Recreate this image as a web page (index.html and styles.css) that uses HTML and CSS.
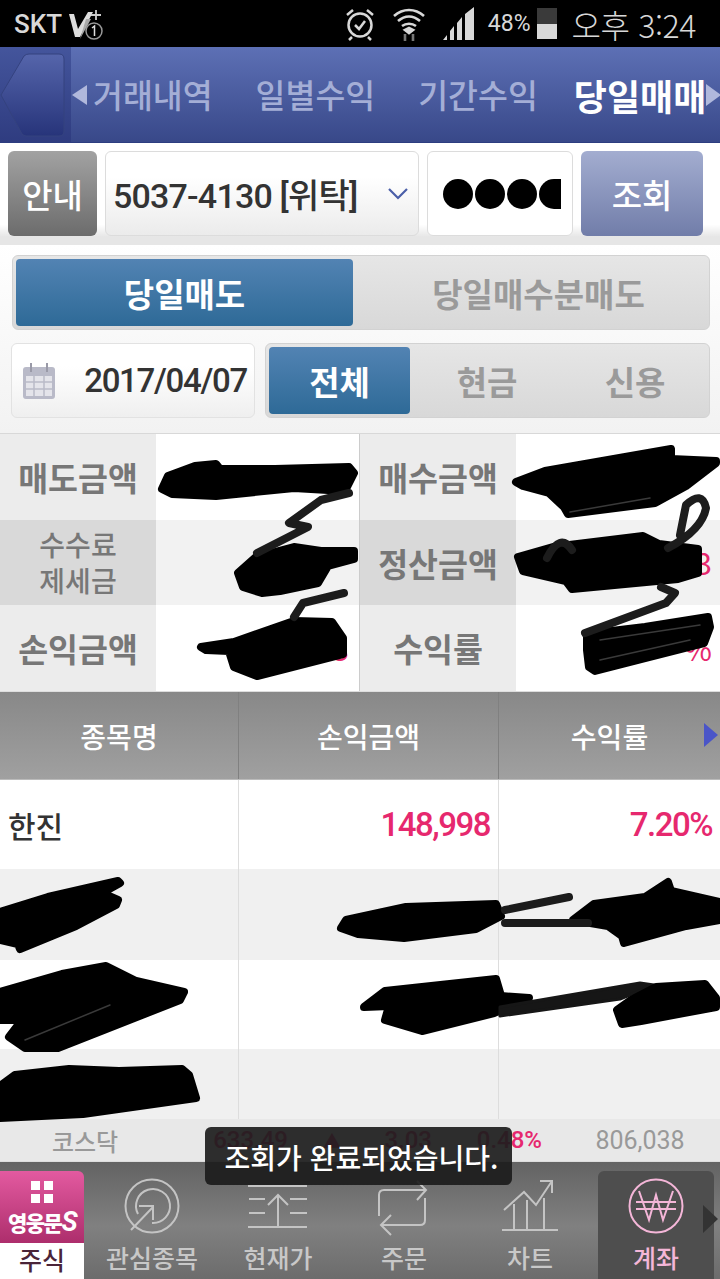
FILE: index.html

```html
<!DOCTYPE html>
<html lang="ko">
<head>
  <meta charset="UTF-8" />
  <meta name="viewport" content="width=device-width, initial-scale=1.0" />
  <title>당일매매</title>
  <link rel="stylesheet" href="styles.css">
</head>
<body>
<div class="page">

  <div class="status">
    <div class="status-left">
      <span class="carrier">SKT</span>
      <svg class="volte" width="36" height="34" viewBox="0 0 36 34">
        <path d="M1 7h5l4 15L20 5h5L12 30H7z" fill="#ddd"/>
        <path d="M18 12h5L12 32z" fill="#aaa"/>
        <path d="M28 3v10M23 8h10" stroke="#ccc" stroke-width="1.800"/>
        <circle cx="26" cy="24" r="8" fill="none" stroke="#999" stroke-width="1.500"/>
        <path d="M24 21l2.500-2v10" fill="none" stroke="#ddd" stroke-width="1.500"/>
      </svg>
    </div>
    <div class="status-right">
      <svg class="alarm" width="32" height="34" viewBox="0 0 32 34" fill="none" stroke="#d8d8d8" stroke-width="2.500">
        <circle cx="16" cy="18" r="11.500"/>
        <path d="M11 18l4 4 6-8M3 8l6-5M29 8l-6-5M8 30l-3 3M24 30l3 3"/>
      </svg>
      <svg class="wifi" width="34" height="36" viewBox="0 0 34 36" fill="none" stroke="#d8d8d8" stroke-width="2.600">
        <path d="M2 10c9-8 21-8 30 0M6 15c7-6 15-6 22 0M10 20c4-3 10-3 14 0"/>
        <path d="M13 24l4 3 4-3-4-2z" fill="#d8d8d8"/>
        <path d="M13 28v7M21 35v-7" stroke="#777"/>
      </svg>
      <svg class="signal" width="32" height="34" viewBox="0 0 32 34" fill="#d8d8d8">
        <path d="M0 33l4-5v5zM7 33V24l4-5v14zM14 33V16l5-6v23zM22 33V7l9-7v33z"/>
      </svg>
      <span class="pct">48%</span>
      <div class="battery"><div class="battery-fill"></div></div>
      <span class="clock">오후 3:24</span>
    </div>
  </div>

  <div class="nav">
    <div class="back"><svg width="71" height="96" viewBox="0 0 71 96">
      <defs><linearGradient id="backFill" x1="0" y1="0" x2="0" y2="1">
        <stop offset="0" stop-color="#5565ab"/><stop offset="1" stop-color="#27347a"/>
      </linearGradient></defs>
      <path d="M1 48L24 9q2-2 5-2h30q5 0 5 5v72q0 5-5 5H26q-2 0-4-2z" fill="url(#backFill)" stroke="#34427f"/>
    </svg></div>
    <span class="arrow arrow-left"></span>
    <a class="nav-item">거래내역</a>
    <a class="nav-item">일별수익</a>
    <a class="nav-item">기간수익</a>
    <a class="nav-item nav-current">당일매매</a>
    <span class="arrow arrow-right"></span>
  </div>

  <div class="account-row">
    <button class="btn-info">안내</button>
    <div class="account-select">
      <span>5037-4130 [위탁]</span>
      <svg width="22" height="12" viewBox="0 0 22 12" fill="none" stroke="#4a5ea8" stroke-width="2.200"><path d="M2 1l9 9 9-9"/></svg>
    </div>
    <div class="password"><i></i><i></i><i></i><i class="cut"></i></div>
    <button class="btn-search">조회</button>
  </div>

  <div class="filters">
    <div class="segment segment-wide">
      <span class="seg-on">당일매도</span>
      <span class="seg-off">당일매수분매도</span>
    </div>
    <div class="filter-row">
      <div class="date">
        <svg width="34" height="38" viewBox="0 0 34 38">
          <rect x="1" y="5" width="32" height="32" rx="3" fill="#b9bac8"/>
          <path d="M4 14h26v20H4z" fill="#e4e4ea"/>
          <path d="M4 20h26M4 27h26M12 14v20M22 14v20" stroke="#b9bac8" stroke-width="1.500"/>
          <path d="M9 1v9M25 1v9" stroke="#9a9aa8" stroke-width="2"/>
        </svg>
        <span>2017/04/07</span>
      </div>
      <div class="segment segment-small">
        <span class="seg-on">전체</span>
        <span class="seg-off">현금</span>
        <span class="seg-off">신용</span>
      </div>
    </div>
  </div>

  <div class="summary">
    <div class="s-label">매도금액</div><div class="s-val"></div>
    <div class="s-label s-left">매수금액</div><div class="s-val"></div>
    <div class="s-label s-dark s-small">수수료<br>제세금</div><div class="s-val s-grey"></div>
    <div class="s-label s-dark s-left">정산금액</div><div class="s-val s-grey"><em>3</em></div>
    <div class="s-label">손익금액</div><div class="s-val"><em class="s-end">3</em></div>
    <div class="s-label s-left">수익률</div><div class="s-val"><em>%</em></div>
  </div>

  <div class="table">
    <div class="t-head">
      <div class="t-cell">종목명</div>
      <div class="t-cell">손익금액</div>
      <div class="t-cell">수익률<span class="t-more"></span></div>
    </div>
    <div class="t-row r1">
      <div class="t-cell t-name">한진</div>
      <div class="t-cell t-num">148,998</div>
      <div class="t-cell t-num">7.20%</div>
    </div>
    <div class="t-row r2 t-grey"><div class="t-cell"></div><div class="t-cell"></div><div class="t-cell"></div></div>
    <div class="t-row r3"><div class="t-cell"></div><div class="t-cell"></div><div class="t-cell"></div></div>
    <div class="t-row r4 t-grey"><div class="t-cell"></div><div class="t-cell"></div><div class="t-cell"></div></div>
  </div>

  <div class="index-strip">
    <span class="i-name">코스닥</span>
    <span class="i-val">633.49</span>
    <span class="i-up">▲</span>
    <span class="i-diff">3.03</span>
    <span class="i-rate">0.48%</span>
    <span class="i-vol">806,038</span>
  </div>

  <div class="tabbar">
    <div class="brand">
      <div class="brand-top">
        <div class="brand-dots"><i></i><i></i><i></i><i></i></div>
        <div class="brand-name">영웅문<b>S</b></div>
      </div>
      <div class="brand-label">주식</div>
    </div>
    <div class="tab">
      <svg width="60" height="60" viewBox="0 0 60 60" fill="none" stroke="#c4c4c4" stroke-width="2">
        <circle cx="30" cy="28" r="26.500"/>
        <path d="M16 36a17 17 0 1 1 14 9M9 52l22-23M17 28h14v14"/>
      </svg>
      <span>관심종목</span>
    </div>
    <div class="tab">
      <svg width="60" height="60" viewBox="0 0 60 60" fill="none" stroke="#c4c4c4" stroke-width="2">
        <path d="M0 8h59M1 21h16M42 21h17M1 35h16M42 35h17M0 49h59M30 49V17M20 27l10-10 10 10"/>
      </svg>
      <span>현재가</span>
    </div>
    <div class="tab">
      <svg width="60" height="60" viewBox="0 0 60 60" fill="none" stroke="#c4c4c4" stroke-width="2">
        <path d="M5 38V17q0-5 5-5h42M43 3l9 9-9 10M51 20v22q0 5-5 5H7M17 37L7 47l10 10"/>
      </svg>
      <span>주문</span>
    </div>
    <div class="tab">
      <svg width="60" height="60" viewBox="0 0 60 60" fill="none" stroke="#c4c4c4" stroke-width="2">
        <path d="M2 52h56M4 32L24 14l12 13L52 3M40 3h12v12M14 52V26M27 52V22M44 52V20"/>
      </svg>
      <span>차트</span>
    </div>
    <div class="tab tab-on">
      <svg width="60" height="60" viewBox="0 0 60 60" fill="none" stroke="#f4b6d8" stroke-width="2">
        <circle cx="30" cy="28" r="26.500"/>
        <path d="M13 13l10 29 7-25 7 25 10-29M10 24h40M10 31h40"/>
      </svg>
      <span>계좌</span>
    </div>
    <span class="tab-more"></span>
  </div>

  <!-- marker scribbles drawn over the private figures -->
  <svg class="scribble" width="720" height="700" viewBox="0 434 720 700" fill="#000" stroke="#000" stroke-width="8" stroke-linejoin="round" stroke-linecap="round">
    <path d="M162 489L168 476L195 466L216 464L220 469L275 469L349 467L354 473L345 491L294 488L216 496L172 494z"/>
    <path d="M238 573L256 557L294 547L321 551L354 551L354 559L328 566L318 583L280 591L262 593L243 587z"/>
    <path d="M201 647L234 642L294 621L332 622L343 638L343 654L257 676L234 667L229 651L206 650z"/>
    <path d="M516 482L545 471L671 449L671 459L716 461L716 463L686 486L655 503L568 514L564 507L549 493L523 486z"/>
    <path d="M518 557L553 547L643 536L659 544L698 549L698 573L678 579L572 589L566 581L523 571z"/>
    <path d="M587 634L645 627L708 617L710 627L704 643L641 659L595 671L589 667L587 650z"/>
    <path d="M0 912L48 897L118 881L120 883L102 893L118 900L116 905L76 926L20 949L18 944L0 940z"/>
    <path d="M341 928L346 920L406 907L496 904L501 916L476 929L404 938L358 934z"/>
    <path d="M573 920L594 904L645 897L668 882L671 891L720 902L720 920L686 926L624 943L622 936L608 926z"/>
    <path d="M0 992L62 974L106 966L136 981L184 992L180 1000L58 1048L25 1048L9 1037L22 1020L0 1020z"/>
    <path d="M364 1007L385 991L496 979L501 996L529 998L494 1013L422 1031L385 1020L389 1006z"/>
    <path d="M500 1007L640 983L654 985L620 999L500 1016z" stroke="#161616" fill="#161616" stroke-width="3"/>
    <path d="M617 1010L631 1000L656 987L705 984L716 998L716 1007L641 1021L622 1024z"/>
    <path d="M15 1075L69 1069L119 1071L182 1069L189 1075L196 1098L83 1114L0 1118L0 1086z"/>
    <g fill="none" stroke="#1c1c1c" stroke-width="8">
      <path d="M349 493L321 500L289 523L308 527L257 553"/>
      <path d="M344 593L303 603L294 617"/>
      <path d="M680 535L686 505Q702 490 706 508Q702 530 668 548"/>
      <path d="M547 558Q560 532 572 550"/>
      <path d="M661 587L675 593L666 603L585 633"/>
      <path d="M505 910L569 897M505 923L588 923"/>
    </g>
    <g fill="none" stroke="#3a3a3a" stroke-width="1.500">
      <path d="M570 512L650 498"/>
      <path d="M600 640L700 625M600 660L690 640"/>
      <path d="M25 1040L110 1005"/>
    </g>
  </svg>

  <div class="toast">조회가 완료되었습니다.</div>
</div>
</body>
</html>
```

FILE: styles.css

```css
* { box-sizing: border-box; }
body {
  margin: 0;
  background: #fff;
  font-family: "Noto Sans CJK KR", "Roboto", sans-serif;
  color: #333;
}
.page {
  position: relative;
  width: 720px;
  height: 1279px;
  overflow: hidden;
}

/* status bar */
.status {
  height: 47px;
  background: #000;
  color: #d8d8d8;
  display: flex;
  justify-content: space-between;
  align-items: center;
  padding: 0 24px 0 14px;
}
.status-left, .status-right { display: flex; align-items: center; }
.carrier { font: 500 26px "Roboto", sans-serif; margin-right: 6px; }
.status-right .alarm { margin-right: 16px; }
.status-right .wifi { margin-right: 17px; }
.status-right .signal { margin-right: 13px; }
.pct { font: 400 23px "Roboto", sans-serif; margin-right: 6px; }
.battery {
  width: 20px;
  height: 31px;
  background: #3a3a3a;
  display: flex;
  align-items: flex-end;
  margin-right: 15px;
}
.battery-fill { width: 100%; height: 15px; background: #d8d8d8; }
.clock { font-size: 32px; font-weight: 300; letter-spacing: -0.4px; line-height: 1; }

/* top nav */
.nav {
  height: 96px;
  background: linear-gradient(to bottom, #5d70b5, #384889);
  display: flex;
  align-items: center;
  border-bottom: 1px solid #2d3d80;
}
.back {
  width: 71px;
  height: 95px;
  background: linear-gradient(to bottom, #44559c, #2f3c80);
  flex: none;
}
.nav-item {
  flex: none;
  white-space: nowrap;
  font-size: 32.500px;
  font-weight: 500;
  color: #a4aed6;
  line-height: 1;
  margin-right: 43px;
}
.nav-current { font-size: 36px; font-weight: 700; color: #fff; margin: 0 0 0 -7px; }
.arrow { width: 0; height: 0; border-style: solid; flex: none; }
.arrow-left { border-width: 10px 15px 10px 0; border-color: transparent #b0b8dc transparent transparent; margin: 0 6px 0 1px; }
.arrow-right { border-width: 11px 0 11px 15px; border-color: transparent transparent transparent #b0b8dc; }

/* account row */
.account-row {
  height: 102px;
  background: linear-gradient(to bottom, #fff 80%, #e6e6e6 92%);
  display: flex;
  gap: 8px;
  padding: 8px 0 9px 8px;
}
.btn-info, .btn-search {
  border: none;
  border-radius: 6px;
  color: #fff;
  font-family: inherit;
  font-size: 33px;
  font-weight: 500;
  padding: 0;
}
.btn-info { width: 89px; background: linear-gradient(to bottom, #a2a2a2, #6c6c6c); }
.btn-search { width: 122px; background: linear-gradient(to bottom, #a3add0, #717da9); }
.account-select {
  width: 314px;
  border: 1px solid #dcdcdc;
  border-radius: 6px;
  background: linear-gradient(to bottom, #fff 30%, #ebebeb);
  display: flex;
  align-items: center;
  justify-content: space-between;
  padding: 0 9px 0 7px;
  font-family: "Roboto", "Noto Sans CJK KR", sans-serif;
  font-size: 34px;
  font-weight: 500;
  letter-spacing: -0.800px;
  color: #333;
}
.password {
  width: 146px;
  border: 1px solid #dcdcdc;
  border-radius: 6px;
  background: #fff;
  display: flex;
  align-items: center;
  gap: 2px;
  padding-left: 15px;
}
.password i { width: 30px; height: 30px; border-radius: 50%; background: #000; flex: none; }
.password .cut { width: 22px; border-radius: 15px 0 0 15px; }

/* filters */
.filters {
  height: 189px;
  background: linear-gradient(to bottom, #fff, #f2f2f2);
  padding: 10px 10px 0 11px;
  border-bottom: 1px solid #d8d8d8;
}
.segment {
  border: 1px solid #d2d2d2;
  border-radius: 6px;
  background: linear-gradient(to bottom, #e6e6e6, #d8d8d8);
  display: flex;
  padding: 3px;
}
.segment span {
  display: flex;
  align-items: center;
  justify-content: center;
  font-size: 33px;
  font-weight: 700;
}
.seg-on {
  color: #fff;
  border-radius: 4px;
  background: linear-gradient(to bottom, #5283b3, #2e6a97);
}
.seg-off { color: #9a9a9a; }
.segment-wide { height: 75px; margin-left: 1px; }
.segment-wide .seg-on { width: 337px; }
.segment-wide .seg-off { flex: 1; padding-left: 18px; }
.filter-row { display: flex; gap: 10px; margin-top: 13px; height: 75px; }
.date {
  width: 244px;
  border: 1px solid #e2e2e2;
  border-radius: 6px;
  background: linear-gradient(to bottom, #fff 30%, #efefef);
  display: flex;
  align-items: center;
  justify-content: space-between;
  padding: 0 7px 0 10px;
  font-family: "Roboto", sans-serif;
  font-size: 33px;
  font-weight: 500;
  letter-spacing: -1.300px;
}
.segment-small { flex: 1; }
.segment-small span { flex: 1; padding-left: 6px; }
.segment-small .seg-on { flex: none; width: 141px; padding-left: 0; }

/* summary grid */
.summary {
  display: grid;
  grid-template-columns: 156px 203px 157px 204px;
  grid-auto-rows: 85.500px;
  height: 258px;
  border-bottom: 2px solid #ddd;
}
.s-label {
  background: #ececec;
  color: #777;
  font-size: 32.500px;
  font-weight: 700;
  display: flex;
  align-items: center;
  justify-content: center;
  text-align: center;
}
.s-left { border-left: 1px solid #ccc; }
.s-dark { background: #d9d9d9; }
.s-small { font-size: 28px; line-height: 36px; font-weight: 500; }
.s-val {
  background: #fff;
  display: flex;
  align-items: center;
  justify-content: flex-end;
  padding-right: 8px;
  font-size: 30px;
  color: #e6286e;
}
.s-val em { font-style: normal; }
.s-val .s-end { margin-right: 2px; }
.s-grey { background: #f2f2f2; }

/* stock table */
.table { height: 427px; }
.t-head, .t-row { display: grid; grid-template-columns: 239px 260px 221px; }
.t-head {
  height: 88px;
  background: linear-gradient(to bottom, #888, #a0a0a0);
  color: #fff;
  font-size: 28px;
  font-weight: 500;
  border-bottom: 1px solid #bbb;
}
.t-cell {
  position: relative;
  display: flex;
  align-items: center;
  justify-content: center;
  border-right: 1px solid #ddd;
}
.t-head .t-cell { border-right-color: #808080; }
.t-cell:last-child { border-right: none; }
.t-more {
  position: absolute;
  right: 2px;
  top: 31px;
  border-style: solid;
  border-width: 12px 0 12px 14px;
  border-color: transparent transparent transparent #4a55c8;
}
.r1 { height: 89px; }
.r2 { height: 91px; }
.r3 { height: 89px; }
.r4 { height: 70px; }
.t-grey { background: #f0f0f0; }
.t-name { justify-content: flex-start; padding-left: 8px; font-size: 30px; font-weight: 500; color: #333; }
.t-num {
  justify-content: flex-end;
  padding-right: 8px;
  font: 500 33px "Roboto", sans-serif;
  letter-spacing: -1.500px;
  color: #e6286e;
}

/* index strip */
.index-strip {
  height: 43px;
  background: #e8e8e8;
  display: grid;
  grid-template-columns: 170px 118px 57px 87px 110px 178px;
  align-items: center;
  font-size: 24px;
  color: #999;
  border-bottom: 1px solid #ddd;
}
.i-name { text-align: center; font-weight: 500; font-size: 24px; }
.i-val, .i-diff, .i-rate {
  text-align: right;
  color: #e6286e;
  font: 500 24px "Roboto", sans-serif;
}
.i-up { text-align: right; color: #e6286e; font-size: 18px; padding-right: 4px; }
.i-vol { text-align: center; font: 400 25px "Roboto", sans-serif; padding-left: 18px; }

/* bottom tabs */
.tabbar {
  height: 117px;
  background: linear-gradient(to bottom, #636363, #808080 55%, #6c6c6c);
  display: flex;
  padding-top: 9px;
  position: relative;
}
.brand { width: 84px; flex: none; margin-right: 5px; }
.brand-top {
  height: 72px;
  border-radius: 0 6px 0 0;
  background: linear-gradient(to bottom, #e35aa0, #ad2e6c);
  padding-top: 10px;
}
.brand-dots {
  width: 22px;
  margin: 0 auto;
  display: grid;
  grid-template-columns: 9px 9px;
  gap: 4px;
}
.brand-dots i { height: 9px; background: #fff; }
.brand-name {
  color: #fff;
  font-size: 21px;
  font-weight: 900;
  line-height: 28px;
  text-align: center;
  letter-spacing: -1.500px;
  margin-top: 3px;
}
.brand-name b { font: italic 700 27px "Roboto", sans-serif; }
.brand-label {
  height: 40px;
  background: #fff;
  color: #4a2438;
  text-align: center;
  font-size: 25px;
  font-weight: 500;
  line-height: 32px;
}
.tab {
  width: 126px;
  flex: none;
  display: flex;
  flex-direction: column;
  align-items: center;
  color: #c8c8c8;
  font-size: 25px;
  font-weight: 500;
  padding-top: 7px;
}
.tab span { line-height: 32px; margin-top: 3px; }
.tab-on {
  width: 116px;
  margin-left: 5px;
  border-radius: 6px 6px 0 0;
  background: #4e4e4e;
  color: #f4b6d8;
}
.tab-more {
  position: absolute;
  right: 2px;
  top: 43px;
  border-style: solid;
  border-width: 14px 0 14px 15px;
  border-color: transparent transparent transparent #333;
}

/* overlays */
.scribble { position: absolute; left: 0; top: 434px; }
.toast {
  position: absolute;
  left: 205px;
  top: 1127px;
  width: 307px;
  height: 58px;
  padding-left: 6px;
  border-radius: 6px;
  background: rgba(28, 28, 28, 0.92);
  color: #fff;
  font-size: 28px;
  font-weight: 500;
  line-height: 60px;
  text-align: center;
  white-space: nowrap;
}
```
